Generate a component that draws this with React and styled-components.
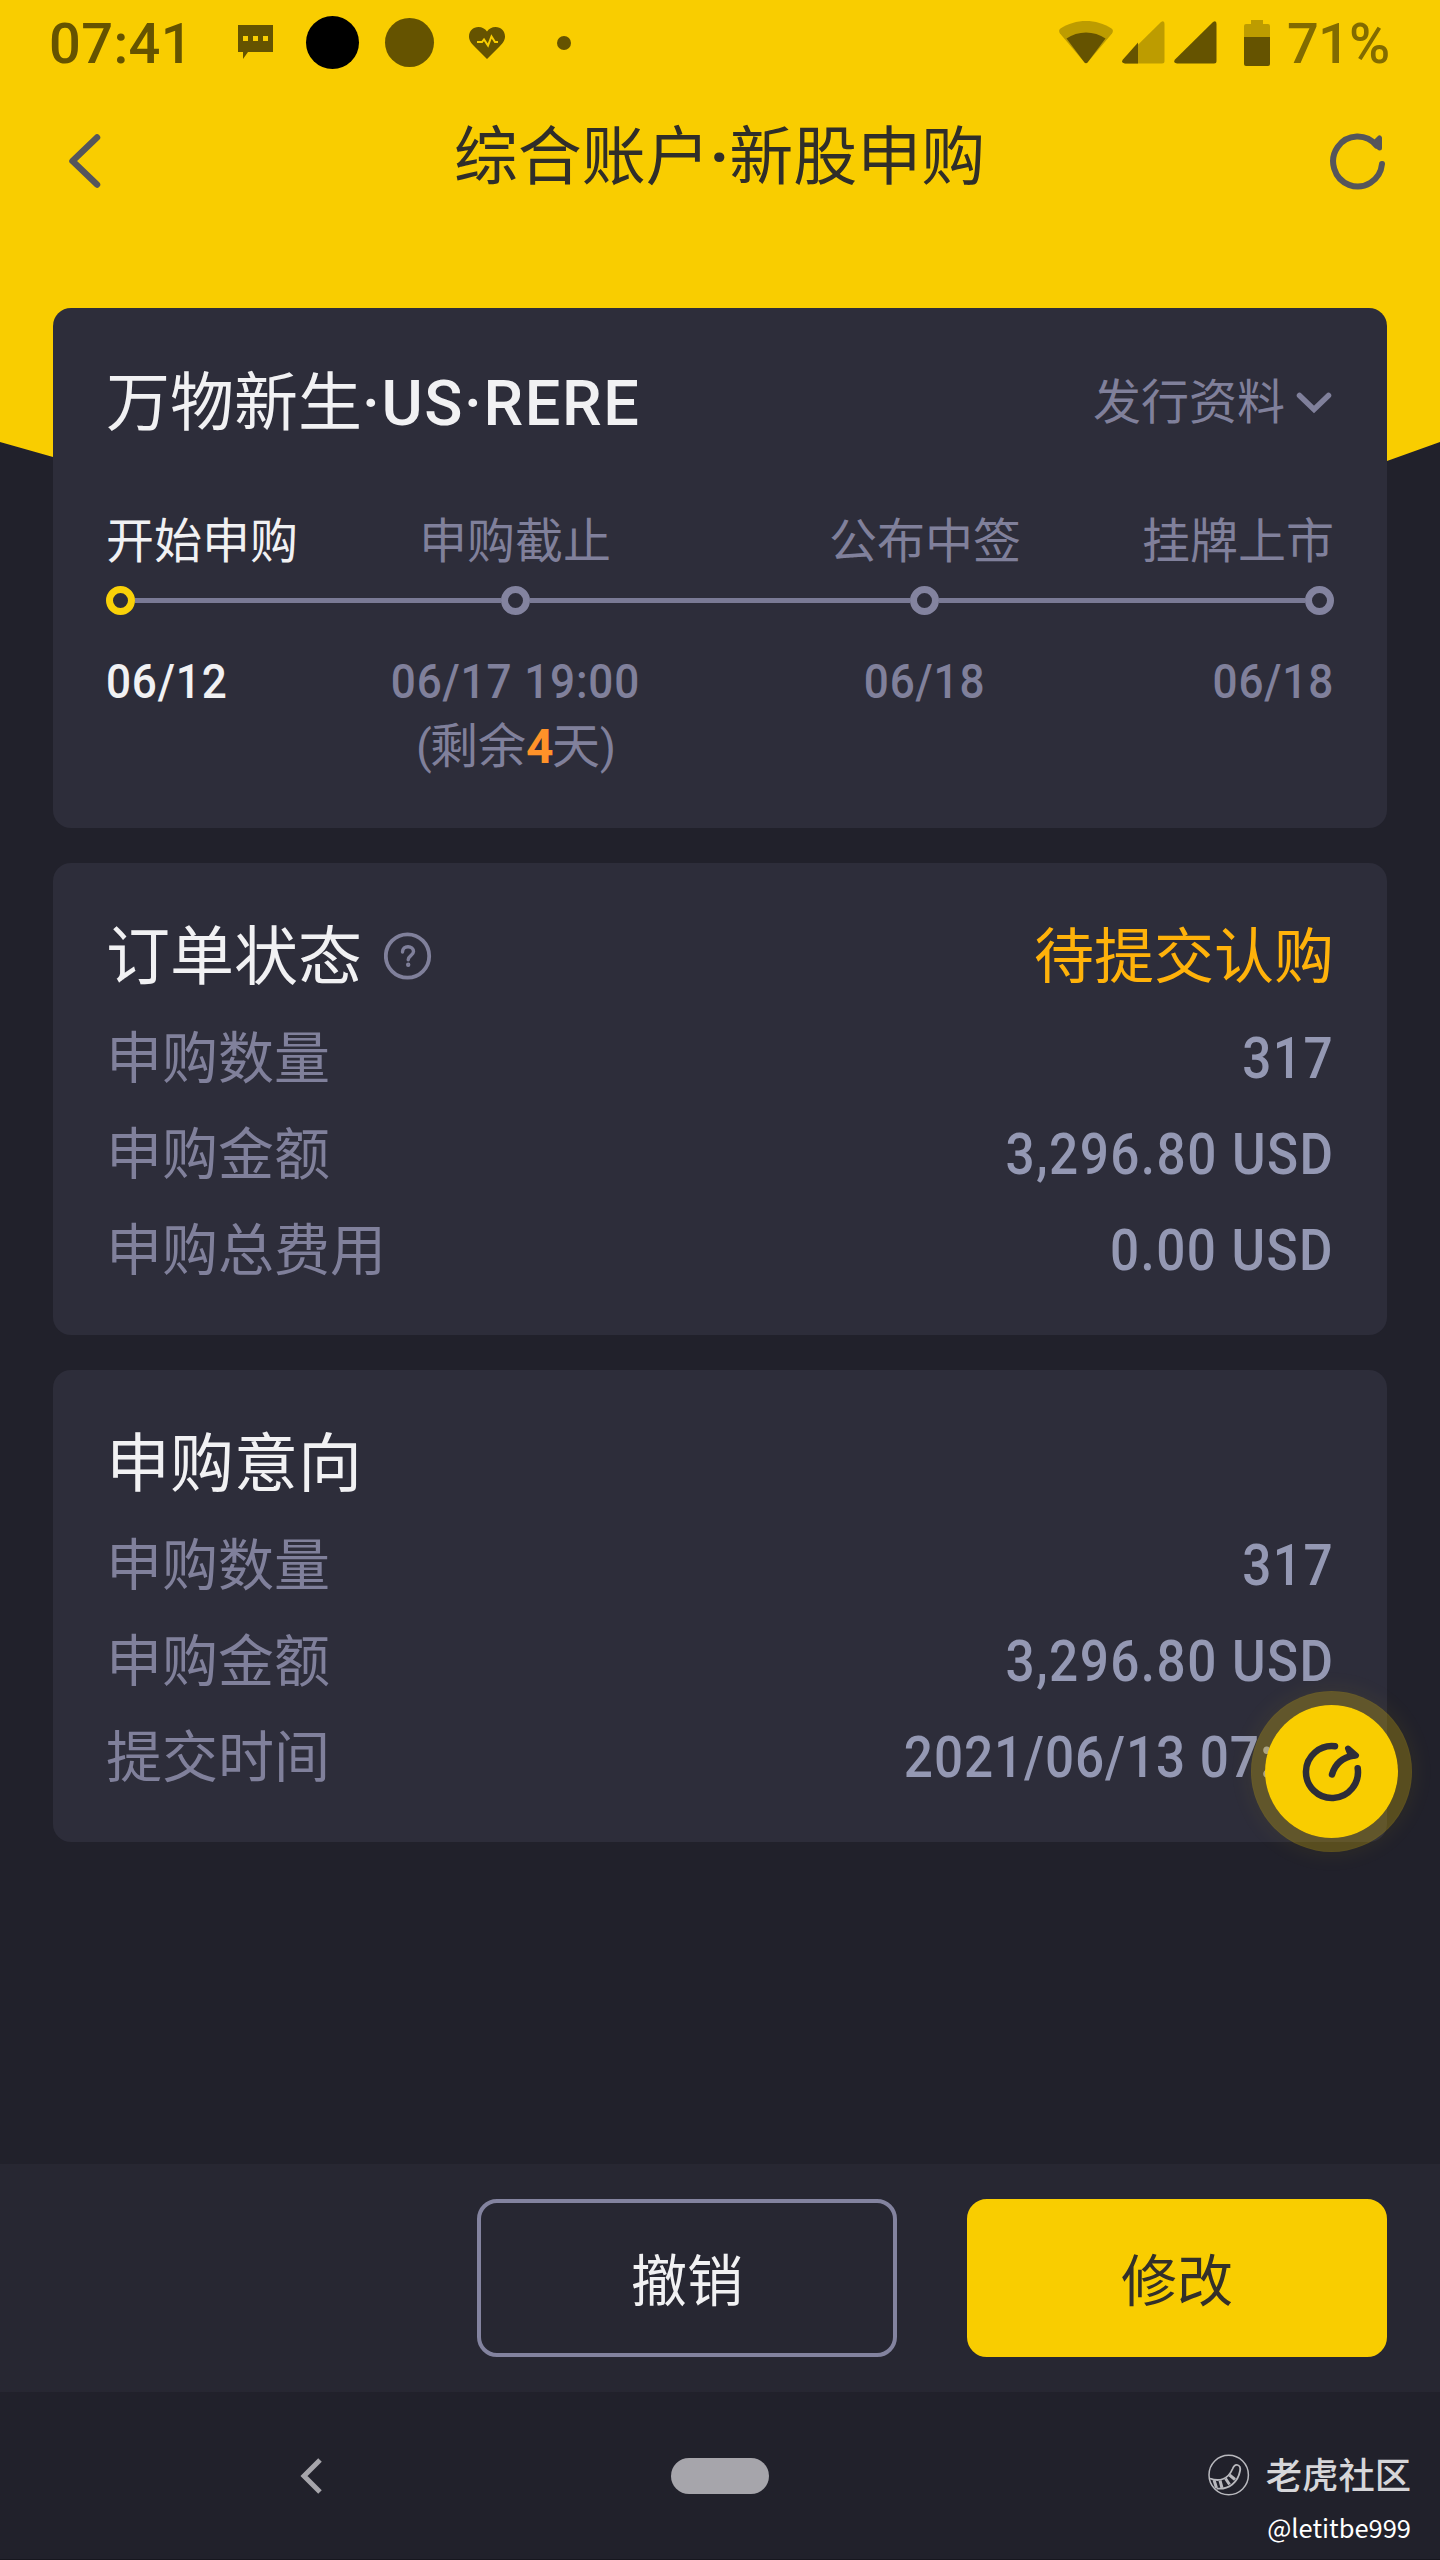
import React from "react";
import styled, { createGlobalStyle, css } from "styled-components";

const GlobalStyle = createGlobalStyle`
  * {
    box-sizing: border-box;
  }
  body {
    margin: 0;
    background: #21212b;
  }
  svg {
    display: block;
    flex: none;
  }
`;

const Screen = styled.div`
  position: relative;
  display: flex;
  flex-direction: column;
  width: 1440px;
  height: 2560px;
  overflow: hidden;
  background: #21212b;
  color: #f1f1f3;
  font-family: Roboto, "Noto Sans CJK SC", sans-serif;
  white-space: nowrap;
`;

const Backdrop = styled.div`
  position: absolute;
  inset: 0 0 auto 0;
  height: 560px;
  background: #f9cd00;
  clip-path: polygon(0 0, 100% 0, 100% 442px, 1387px 461px, 1100px 540px, 340px 540px, 53px 457px, 0 442px);
`;

const Body = styled.div`
  position: relative;
  display: flex;
  flex-direction: column;
  flex: 1;
`;

const StatusBar = styled.div`
  display: flex;
  align-items: center;
  height: 85px;
  padding: 0 49px 0 48px;
  color: #655300;
`;

const Clock = styled.div`
  width: 169px;
  padding: 3px 0 0 1px;
  font-size: 56px;
  font-weight: 500;
  line-height: 1;
  letter-spacing: 0.4px;
`;

const Notice = styled.div`
  display: flex;
  align-items: center;
  justify-content: center;
  width: 77px;
`;

const Dot = styled.span`
  width: ${(p) => p.$size}px;
  height: ${(p) => p.$size}px;
  border-radius: 50%;
  background: ${(p) => p.$color || "#655300"};
`;

const SystemIcons = styled.div`
  display: flex;
  align-items: center;
  gap: 9px;
  margin-left: auto;
`;

const Percent = styled.div`
  width: 104px;
  margin-left: 8px;
  padding-top: 3px;
  color: #826b00;
  font-size: 56px;
  font-weight: 500;
  line-height: 1;
  letter-spacing: -0.8px;
`;

const TitleBar = styled.header`
  display: flex;
  align-items: center;
  justify-content: space-between;
  height: 151px;
  padding: 0 53px 0 66px;
  color: #55555b;
`;

const PageTitle = styled.h1`
  margin: 0 0 6px 8px;
  color: #302e29;
  font-size: 64px;
  font-weight: 400;
  line-height: 144px;
  b {
    font-weight: 700;
  }
`;

const Cards = styled.main`
  display: flex;
  flex-direction: column;
  gap: 35px;
  padding: 72px 53px 0;
`;

const Card = styled.section`
  height: ${(p) => p.$height}px;
  padding: ${(p) => p.$top}px 53px 0;
  border-radius: 18px;
  background: #2d2d3a;
`;

const CardHead = styled.div`
  display: flex;
  align-items: center;
  justify-content: space-between;
  height: 72px;
`;

const CardTitle = styled.h2`
  display: flex;
  align-items: center;
  gap: 22px;
  margin: 0;
  font-size: 64px;
  font-weight: 400;
  line-height: 72px;
`;

const Ticker = styled.span`
  font-size: 63px;
  font-weight: 500;
  letter-spacing: 1.6px;
`;

const Toggle = styled.div`
  display: flex;
  align-items: center;
  gap: 9px;
  color: #80809b;
  font-size: 48px;
  line-height: 70px;
  padding-bottom: 2px;
`;

const Status = styled.div`
  color: #ffb20a;
  font-size: 60px;
  line-height: 72px;
`;

const StepGrid = styled.div`
  display: grid;
  grid-template-columns: 204px 1fr 1fr 204px;
  color: #80809b;
  font-size: 48px;
  line-height: 65px;
  margin-top: ${(p) => p.$gap}px;
`;

const Step = styled.div`
  text-align: ${(p) => p.$align || "center"};
  ${(p) =>
    p.$active &&
    css`
      color: #f1f1f3;
    `}
`;

/* figures are set slightly condensed */
const StepDate = styled.span`
  display: inline-block;
  font-size: 49px;
  font-weight: 500;
  letter-spacing: 0.9px;
  transform: scaleX(0.9);
  transform-origin: ${(p) => p.$align || "center"};
`;

const Remaining = styled.div`
  b {
    display: inline-block;
    width: 26px;
    color: #ff9229;
    font-weight: 700;
  }
`;

const Paren = styled.span`
  display: inline-block;
  width: 14px;
  font-size: 46px;
`;

const Track = styled.div`
  display: flex;
  align-items: center;
  height: 29px;
  margin-top: 12px;
`;

const Node = styled.span`
  width: 29px;
  height: 29px;
  border: 7px solid ${(p) => (p.$active ? "#f9d108" : "#83839f")};
  border-radius: 50%;
`;

const Segment = styled.span`
  flex: ${(p) => p.$grow} 0 0;
  height: 5px;
  background: #7a7a95;
`;

const Rows = styled.div`
  padding-top: 17px;
`;

const Row = styled.div`
  display: flex;
  align-items: center;
  justify-content: space-between;
  height: 96px;
  line-height: 96px;
`;

const Label = styled.span`
  color: #80809b;
  font-size: 56px;
`;

const Value = styled.span`
  color: #9498b3;
  font-size: 57px;
  font-weight: 500;
  letter-spacing: ${(p) => p.$spacing || 1.6}px;
  transform: scaleX(0.9);
  transform-origin: right;
`;

const FloatButton = styled.button`
  position: absolute;
  top: 1691px;
  left: 1251px;
  display: flex;
  align-items: center;
  justify-content: center;
  width: 161px;
  height: 161px;
  padding: 0;
  border: 14px solid rgba(248, 205, 0, 0.26);
  border-radius: 50%;
  background: #f9cd00;
  background-clip: padding-box;
  box-shadow: 0 0 24px rgba(248, 205, 0, 0.08);
`;

const ActionBar = styled.footer`
  display: flex;
  justify-content: flex-end;
  gap: 70px;
  height: 228px;
  margin-top: auto;
  padding: 35px 53px;
  background: #272732;
`;

const Action = styled.button`
  width: 420px;
  height: 158px;
  padding: 0 0 4px;
  border: 4px solid #83839f;
  border-radius: 20px;
  background: transparent;
  color: #f1f1f3;
  font-family: inherit;
  font-size: 56px;
  ${(p) =>
    p.$primary &&
    css`
      border-color: #f9cd00;
      background: #f9cd00;
      color: #33302a;
    `}
`;

const NavBar = styled.nav`
  display: grid;
  grid-template-columns: 371px 98px 1fr;
  height: 168px;
  padding: 62px 29px 0 300px;
  border-bottom: 1px solid #16161e;
`;

const HomePill = styled.span`
  width: 98px;
  height: 36px;
  margin-top: 4px;
  border-radius: 18px;
  background: #a6a5ab;
`;

const Watermark = styled.div`
  display: flex;
  flex-direction: column;
  align-items: flex-end;
`;

const Brand = styled.div`
  display: flex;
  align-items: center;
  gap: 16px;
  height: 42px;
  color: #d6d6d9;
  font-family: "Noto Sans CJK SC", sans-serif;
  font-size: 36.3px;
  font-weight: 500;
  line-height: 36px;
  span {
    padding-bottom: 5px;
  }
`;

const Handle = styled.div`
  margin-top: 13px;
  color: #fff;
  font-family: "Noto Sans CJK SC", sans-serif;
  font-size: 25.5px;
  line-height: 35px;
`;

const ChatIcon = () => (
  <svg width="35" height="35" viewBox="0 0 35 35">
    <path d="M0 0h35v27H10l-5 7v-7H0z" fill="#655300" />
    <path d="M5 11h5v5H5zM15 11h5v5h-5zM25 11h5v5h-5z" fill="#f9cd00" />
  </svg>
);

const HeartIcon = () => (
  <svg width="36" height="32" viewBox="0 0 36 32">
    <path
      d="M18 32 5 19C1 15 0 12 0 9.500 0 4 4 0 9.500 0c3.500 0 6.500 1.600 8.500 4.500C20 1.600 23 0 26.500 0 32 0 36 4 36 9.500c0 2.500-1 5.500-5 9.500z"
      fill="#655300"
    />
    <path d="M8 15h5l2-2.500 4 6 3.500-9 3.500 5.500h3" fill="none" stroke="#f9cd00" strokeWidth="2" />
  </svg>
);

const WifiIcon = () => (
  <svg width="54" height="43" viewBox="0 0 54 43">
    <path
      d="M1 12.500C-.300 10.800-.200 8.700 1.500 7.500 9 2.500 18 0 27 0s18 2.500 25.500 7.500c1.700 1.200 1.800 3.300.500 5L28.500 41.500q-1.500 1.500-3 0z"
      fill="#bd9c00"
    />
    <path d="M7.500 17.500C13 13.500 20 11.500 27 11.500s14 2 19.500 6l-18 24q-1.500 1.500-3 0z" fill="#655300" />
  </svg>
);

const SignalIcon = ({ weak }) => (
  <svg width="43" height="43" viewBox="0 0 43 43">
    <path d="M39 1q3.500-2 3.500 2v37q0 2.500-2.500 2.500H3q-4.500-.500-2-4z" fill={weak ? "#bd9c00" : "#655300"} />
    {weak && <path d="M16 21.500V42.500H3q-4.500-.500-2-4z" fill="#655300" />}
  </svg>
);

const Battery = styled.svg`
  margin-left: 18px;
`;

const BatteryIcon = () => (
  <Battery width="26" height="46" viewBox="0 0 26 46">
    <path d="M7 0h12v4h5q2 0 2 2v11H0V6q0-2 2-2h5z" fill="#bd9c00" />
    <path d="M0 17h26v27q0 2-2 2H2q-2 0-2-2z" fill="#655300" />
  </Battery>
);

const BackIcon = () => (
  <svg width="36" height="58" viewBox="0 0 36 58">
    <path d="M31 5.500 6.500 29 31 52.500" fill="none" stroke="currentColor" strokeWidth="6.500" strokeLinecap="round" strokeLinejoin="round" />
  </svg>
);

const RefreshIcon = () => (
  <svg width="58" height="58" viewBox="0 0 58 58">
    <path
      d="M53 32A24.500 25 0 1 1 47.500 13.500"
      fill="none"
      stroke="currentColor"
      strokeWidth="6"
      strokeLinecap="round"
    />
    <path d="M50.500 6v10l-5-5z" fill="currentColor" stroke="currentColor" strokeWidth="5" strokeLinejoin="round" />
  </svg>
);

const ChevronIcon = () => (
  <svg width="40" height="28" viewBox="0 0 40 28">
    <path d="m5.500 6.500 14.500 14 14.500-14" fill="none" stroke="currentColor" strokeWidth="5.500" strokeLinecap="round" />
  </svg>
);

const Help = styled.svg`
  margin-bottom: 5px;
`;

const HelpIcon = () => (
  <Help width="48" height="48" viewBox="0 0 48 48" fill="none" stroke="#80809b">
    <circle cx="23.500" cy="24" r="21.700" strokeWidth="3.800" />
    <path d="M18.500 20c0-3.500 2.400-5.300 5.500-5.300s5.500 2 5.500 4.800c0 4-5.300 4.200-5.300 8.200" strokeWidth="3.400" strokeLinecap="round" />
    <circle cx="24.200" cy="32.800" r="1" strokeWidth="2.400" />
  </Help>
);

const TradeIcon = () => (
  <svg width="66" height="66" viewBox="0 0 66 66" fill="none" stroke="#2d2d38" strokeWidth="6.500" strokeLinecap="round">
    <path d="M36 7.200A26 26 0 1 0 58.700 29.300" />
    <path d="M33 35.500C36 25 43 18.500 55 16.500" />
    <path d="M49 9.500 57 16.500 52 17z" fill="#2d2d38" strokeWidth="6" strokeLinejoin="round" />
  </svg>
);

const NavBack = styled.svg`
  margin-top: 2px;
`;

const NavBackIcon = () => (
  <NavBack width="24" height="40" viewBox="0 0 24 40">
    <path d="M20 4 4 20l16 16" fill="none" stroke="#a6a5ab" strokeWidth="5" />
  </NavBack>
);

const TigerTailIcon = () => (
  <svg width="42" height="42" viewBox="0 0 42 42" fill="none" stroke="#b9b9be">
    <circle cx="20.700" cy="21" r="19.700" strokeWidth="1.500" />
    <path d="M2 24.500c9 3.500 18 1 22.500-9.500 1.500-4 3-4.500 5-4 2.500.700 3.200 2.500 2.500 6C30 28 21 36 8.500 34.500" strokeWidth="1.800" />
    <path d="m6 26 2.500 8M12 26.500l2 7.500M17.500 24.500l4 6M21.500 21l5.500 4.500" strokeWidth="3" />
  </svg>
);

const steps = [
  { label: "开始申购", date: "06/12", align: "left", active: true },
  { label: "申购截止", date: "06/17 19:00", days: 4 },
  { label: "公布中签", date: "06/18" },
  { label: "挂牌上市", date: "06/18", align: "right" },
];

const orderRows = [
  { label: "申购数量", value: "317" },
  { label: "申购金额", value: "3,296.80 USD" },
  { label: "申购总费用", value: "0.00 USD" },
];

const intentRows = [
  { label: "申购数量", value: "317" },
  { label: "申购金额", value: "3,296.80 USD" },
  { label: "提交时间", value: "2021/06/13 07:41", spacing: 1 },
];

const DetailRows = ({ rows }) => (
  <Rows>
    {rows.map((row) => (
      <Row key={row.label}>
        <Label>{row.label}</Label>
        <Value $spacing={row.spacing}>{row.value}</Value>
      </Row>
    ))}
  </Rows>
);

const Timeline = () => (
  <>
    <StepGrid $gap={69}>
      {steps.map((step) => (
        <Step key={step.label} $align={step.align} $active={step.active}>
          {step.label}
        </Step>
      ))}
    </StepGrid>
    <Track>
      <Node $active />
      <Segment $grow={365} />
      <Node />
      <Segment $grow={380} />
      <Node />
      <Segment $grow={365} />
      <Node />
    </Track>
    <StepGrid $gap={34}>
      {steps.map((step) => (
        <Step key={step.label} $align={step.align} $active={step.active}>
          <StepDate $align={step.align}>{step.date}</StepDate>
          {step.days && (
            <Remaining>
              <Paren>(</Paren>剩余<b>{step.days}</b>天<Paren>)</Paren>
            </Remaining>
          )}
        </Step>
      ))}
    </StepGrid>
  </>
);

const App = () => {
  return (
    <>
      <GlobalStyle />
      <Screen>
        <Backdrop />
        <Body>
          <StatusBar>
            <Clock>07:41</Clock>
            <Notice>
              <ChatIcon />
            </Notice>
            <Notice>
              <Dot $size={53} $color="#000" />
            </Notice>
            <Notice>
              <Dot $size={49} />
            </Notice>
            <Notice>
              <HeartIcon />
            </Notice>
            <Notice>
              <Dot $size={14} />
            </Notice>
            <SystemIcons>
              <WifiIcon />
              <SignalIcon weak />
              <SignalIcon />
              <BatteryIcon />
              <Percent>71%</Percent>
            </SystemIcons>
          </StatusBar>
          <TitleBar>
            <BackIcon />
            <PageTitle>
              综合账户<b>·</b>新股申购
            </PageTitle>
            <RefreshIcon />
          </TitleBar>
          <Cards>
            <Card $height={520} $top={60}>
              <CardHead>
                <CardTitle>
                  <span>
                    万物新生<Ticker>·US·RERE</Ticker>
                  </span>
                </CardTitle>
                <Toggle>
                  发行资料
                  <ChevronIcon />
                </Toggle>
              </CardHead>
              <Timeline />
            </Card>
            <Card $height={472} $top={59}>
              <CardHead>
                <CardTitle>
                  订单状态
                  <HelpIcon />
                </CardTitle>
                <Status>待提交认购</Status>
              </CardHead>
              <DetailRows rows={orderRows} />
            </Card>
            <Card $height={472} $top={59}>
              <CardHead>
                <CardTitle>申购意向</CardTitle>
              </CardHead>
              <DetailRows rows={intentRows} />
            </Card>
          </Cards>
          <ActionBar>
            <Action>撤销</Action>
            <Action $primary>修改</Action>
          </ActionBar>
          <NavBar>
            <NavBackIcon />
            <HomePill />
            <Watermark>
              <Brand>
                <TigerTailIcon />
                <span>老虎社区</span>
              </Brand>
              <Handle>@letitbe999</Handle>
            </Watermark>
          </NavBar>
        </Body>
        <FloatButton>
          <TradeIcon />
        </FloatButton>
      </Screen>
    </>
  );
};

export default App;
